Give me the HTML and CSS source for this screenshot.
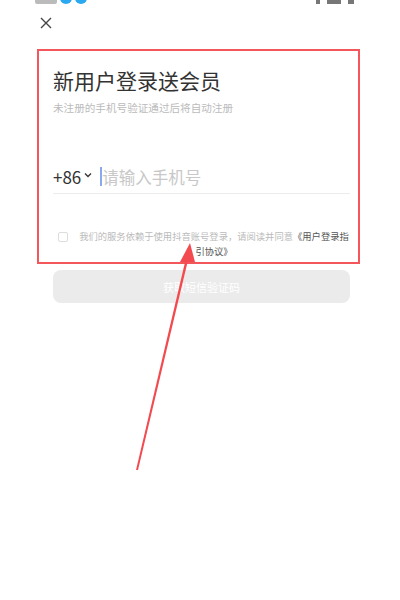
FILE: index.html
```html
<!DOCTYPE html>
<html lang="zh-CN">

<head>
  <meta charset="UTF-8">
  <meta name="viewport" content="width=device-width, initial-scale=1.0">
  <title>手机号登录</title>
  <link rel="stylesheet" href="styles.css">
</head>

<body>

  <!-- lower edge of the phone status bar -->
  <div class="status-bar">
    <div class="status-left">
      <span class="clock"></span>
      <span class="dot"></span>
      <span class="dot"></span>
    </div>
    <div class="status-right">
      <span class="sig"></span>
      <span class="batt"></span>
      <span class="batt small"></span>
    </div>
  </div>

  <div class="top-row">
    <svg class="close" width="12" height="12" viewBox="0 0 12 12">
      <path d="M1 1 L11 11 M11 1 L1 11" stroke="#444" stroke-width="1.4" fill="none" />
    </svg>
  </div>

  <div class="form">
    <div class="highlight">
      <h1>新用户登录送会员</h1>
      <p class="sub">未注册的手机号验证通过后将自动注册</p>

      <div class="phone-row">
        <span class="code">+86</span>
        <svg class="chev" width="8" height="6" viewBox="0 0 8 6">
          <path d="M1 1.5 L4 4.5 L7 1.5" stroke="#333" stroke-width="1.3" fill="none" />
        </svg>
        <span class="caret"></span>
        <span class="placeholder">请输入手机号</span>
      </div>

      <div class="agree">
        <span class="check"></span>
        <p>我们的服务依赖于使用抖音账号登录，请阅读并同意<b>《用户登录指引协议》</b></p>
      </div>
    </div>

    <button class="send">获取短信验证码</button>
  </div>

  <!-- annotation arrow pointing at the agreement line -->
  <svg class="arrow" width="400" height="600" viewBox="0 0 400 600">
    <path d="M136 470 L186 258 L188.4 258.5 L138 470 Z" fill="#f24a4f" />
    <path d="M190 243 L180 262 L195 262 Z" fill="#f24a4f" />
  </svg>

</body>

</html>
```

FILE: styles.css
```css
* {
  margin: 0;
  padding: 0;
  box-sizing: border-box;
}

body {
  font-family: "Noto Sans CJK SC", "Noto Sans", sans-serif;
  background-color: #ffffff;
  width: 400px;
  height: 600px;
  position: relative;
  overflow: hidden;
}

.status-bar {
  height: 4px;
  overflow: hidden;
  display: flex;
  justify-content: space-between;
  padding: 0 46px 0 35px;
}

.status-left,
.status-right {
  display: flex;
  align-items: flex-end;
  gap: 3px;
  margin-top: -9px;
  height: 13px;
}

.clock {
  width: 22px;
  height: 9px;
  background-color: #bbb;
  border-radius: 2px;
}

.dot {
  width: 12px;
  height: 12px;
  border-radius: 50%;
  background-color: #2aa8f0;
}

.sig {
  width: 4px;
  height: 10px;
  background-color: #777;
}

.batt {
  width: 14px;
  height: 10px;
  background-color: #777;
  margin-left: 4px;
}

.batt.small {
  width: 6px;
}

.top-row {
  padding: 13px 0 0 40px;
  height: 45px;
}

.close {
  display: block;
}

.form {
  padding: 0 50px 0 53px;
}

.highlight {
  margin: 0 -10px 0 -16px;
  padding: 14px 8px 3px 14px;
  border: 2px solid #f4575b;
}

h1 {
  font-size: 21px;
  font-weight: 400;
  line-height: 30px;
  color: #333;
}

.sub {
  margin-top: 5px;
  font-size: 10.6px;
  line-height: 16px;
  color: #bbb;
}

.phone-row {
  margin-top: 46px;
  display: flex;
  align-items: center;
  height: 32px;
  border-bottom: 1px solid #ececec;
  padding-bottom: 2px;
}

.code {
  font-size: 17px;
  color: #333;
}

.chev {
  margin: 0 0 3px 3px;
}

.caret {
  width: 2px;
  height: 19px;
  background-color: #8aa8ee;
  margin-left: 8px;
}

.placeholder {
  font-size: 16.5px;
  color: #c8c8c8;
}

.agree {
  margin-top: 35px;
  display: flex;
  align-items: flex-start;
  padding-left: 5px;
}

.check {
  flex: none;
  width: 10px;
  height: 10px;
  border: 1px solid #ddd;
  border-radius: 2px;
  margin-top: 3px;
}

.agree p {
  flex: 1;
  margin-left: 10px;
  font-size: 9.3px;
  line-height: 15px;
  color: #bbb;
  text-align: center;
}

.agree b {
  font-weight: 400;
  color: #555;
}

.send {
  display: block;
  width: 100%;
  height: 33px;
  margin-top: 6px;
  border: none;
  border-radius: 8px;
  background-color: #ebebeb;
  color: #fff;
  font-family: inherit;
  font-size: 11px;
}

.arrow {
  position: absolute;
  left: 0;
  top: 0;
  pointer-events: none;
}
```
